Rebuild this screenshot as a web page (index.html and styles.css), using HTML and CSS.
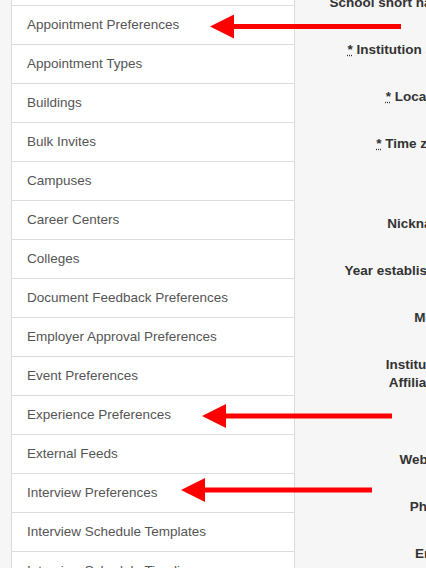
FILE: index.html
```html
<!DOCTYPE html>
<html lang="en">
<head>
  <meta charset="UTF-8">
  <title>Settings</title>
  <link rel="stylesheet" href="styles.css">
</head>
<body>
  <div class="page">
    <ul class="side-nav">
      <li>Appearance</li>
      <li>Appointment Preferences</li>
      <li>Appointment Types</li>
      <li>Buildings</li>
      <li>Bulk Invites</li>
      <li>Campuses</li>
      <li>Career Centers</li>
      <li>Colleges</li>
      <li>Document Feedback Preferences</li>
      <li>Employer Approval Preferences</li>
      <li>Event Preferences</li>
      <li>Experience Preferences</li>
      <li>External Feeds</li>
      <li>Interview Preferences</li>
      <li>Interview Schedule Templates</li>
      <li>Interview Schedule Timelines</li>
    </ul>

    <form class="school-form">
      <div class="field"><label>School short name</label></div>
      <div class="field"><label><abbr title="required">*</abbr> Institution size</label></div>
      <div class="field"><label><abbr title="required">*</abbr> Location</label></div>
      <div class="field tall"><label><abbr title="required">*</abbr> Time zone</label></div>
      <div class="field"><label>Nickname</label></div>
      <div class="field"><label>Year established</label></div>
      <div class="field"><label>Motto</label></div>
      <div class="field taller"><label>Institution Affiliation</label></div>
      <div class="field"><label>Website</label></div>
      <div class="field"><label>Phone</label></div>
      <div class="field"><label>Email</label></div>
    </form>
  </div>

  <!-- annotation arrows -->
  <svg class="arrows" width="426" height="568" viewBox="0 0 426 568">
    <g fill="#ff0000" stroke="#ff0000">
      <line x1="230" y1="26.5" x2="401" y2="26.5" stroke-width="5"/>
      <polygon points="210,26.5 234,14.5 234,38.5" stroke="none"/>
      <line x1="222" y1="416" x2="392" y2="416" stroke-width="5"/>
      <polygon points="202,416 226,404 226,428" stroke="none"/>
      <line x1="201" y1="490" x2="372" y2="490" stroke-width="5"/>
      <polygon points="181,490 205,478 205,502" stroke="none"/>
    </g>
  </svg>
</body>
</html>
```

FILE: styles.css
```css
body {
  margin: 0;
  background: #f6f6f6;
  font-family: "Liberation Sans", Arial, sans-serif;
  overflow: hidden;
}
.page {
  display: flex;
  align-items: flex-start;
  padding-left: 11px;
  width: 600px;
}
.side-nav {
  list-style: none;
  margin: -33px 0 0 0;
  padding: 0;
  width: 282px;
  flex: none;
  background: #fff;
  border-left: 1px solid #dcdcdc;
  border-right: 1px solid #dcdcdc;
}
.side-nav li {
  height: 38px;
  line-height: 38px;
  padding-left: 15px;
  font-size: 13.5px;
  color: #555;
  border-bottom: 1px solid #dcdcdc;
}
.school-form {
  margin-top: -6px;
  flex: none;
  width: 156px;
}
.field {
  height: 47px;
  text-align: right;
}
.field.tall {
  height: 80px;
}
.field.taller {
  height: 95px;
}
.field label {
  display: block;
  font-size: 13.5px;
  line-height: 18px;
  font-weight: bold;
  color: #333;
  width: 126px;
  margin-left: auto;
}
abbr {
  text-decoration: underline dotted;
}
.arrows {
  position: absolute;
  top: 0;
  left: 0;
}
```
